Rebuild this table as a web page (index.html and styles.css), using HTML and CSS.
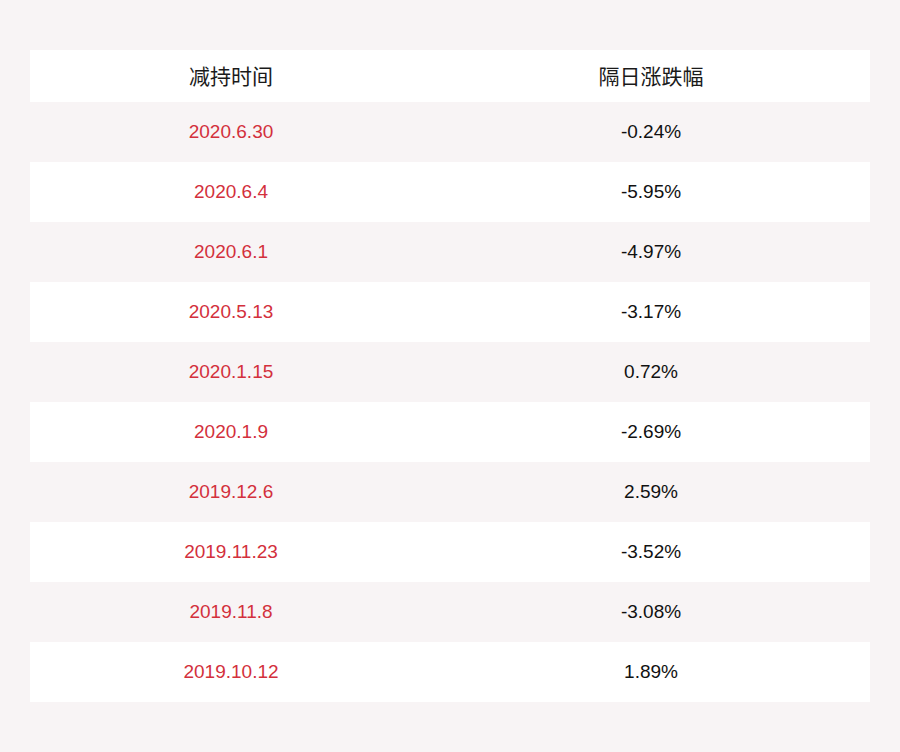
FILE: index.html
```html
<!DOCTYPE html>
<html lang="zh">
<head>
<meta charset="utf-8">
<link rel="stylesheet" href="styles.css">
</head>
<body>
<div class="page">
  <table class="data">
    <thead>
      <tr><th class="c1">减持时间</th><th class="c2">隔日涨跌幅</th></tr>
    </thead>
    <tbody>
      <tr><td class="date">2020.6.30</td><td>-0.24%</td></tr>
      <tr><td class="date">2020.6.4</td><td>-5.95%</td></tr>
      <tr><td class="date">2020.6.1</td><td>-4.97%</td></tr>
      <tr><td class="date">2020.5.13</td><td>-3.17%</td></tr>
      <tr><td class="date">2020.1.15</td><td>0.72%</td></tr>
      <tr><td class="date">2020.1.9</td><td>-2.69%</td></tr>
      <tr><td class="date">2019.12.6</td><td>2.59%</td></tr>
      <tr><td class="date">2019.11.23</td><td>-3.52%</td></tr>
      <tr><td class="date">2019.11.8</td><td>-3.08%</td></tr>
      <tr><td class="date">2019.10.12</td><td>1.89%</td></tr>
    </tbody>
  </table>
</div>
</body>
</html>
```

FILE: styles.css
```css
html, body {
  margin: 0;
  padding: 0;
  background: #f8f4f5;
}
.page {
  width: 900px;
  height: 752px;
  padding: 50px 30px;
  box-sizing: border-box;
}
.data {
  width: 840px;
  border-collapse: collapse;
  table-layout: fixed;
  font-family: "Liberation Sans", Arial, "Noto Sans CJK SC", sans-serif;
  font-size: 19px;
  color: #111;
}
.data th {
  height: 50px;
  padding: 0 0 2px;
  background: #fff;
  font-weight: normal;
  font-size: 21px;
  font-family: "Noto Sans CJK SC", sans-serif;
  color: #1a1a1a;
  text-align: center;
  vertical-align: middle;
}
.data th.c1 { width: 402px; }
.data td {
  height: 60px;
  padding: 0;
  text-align: center;
  vertical-align: middle;
}
.data tbody tr:nth-child(odd) td { background: #f8f4f5; }
.data tbody tr:nth-child(even) td { background: #fff; }
.data td.date { color: #d3303c; }
```
